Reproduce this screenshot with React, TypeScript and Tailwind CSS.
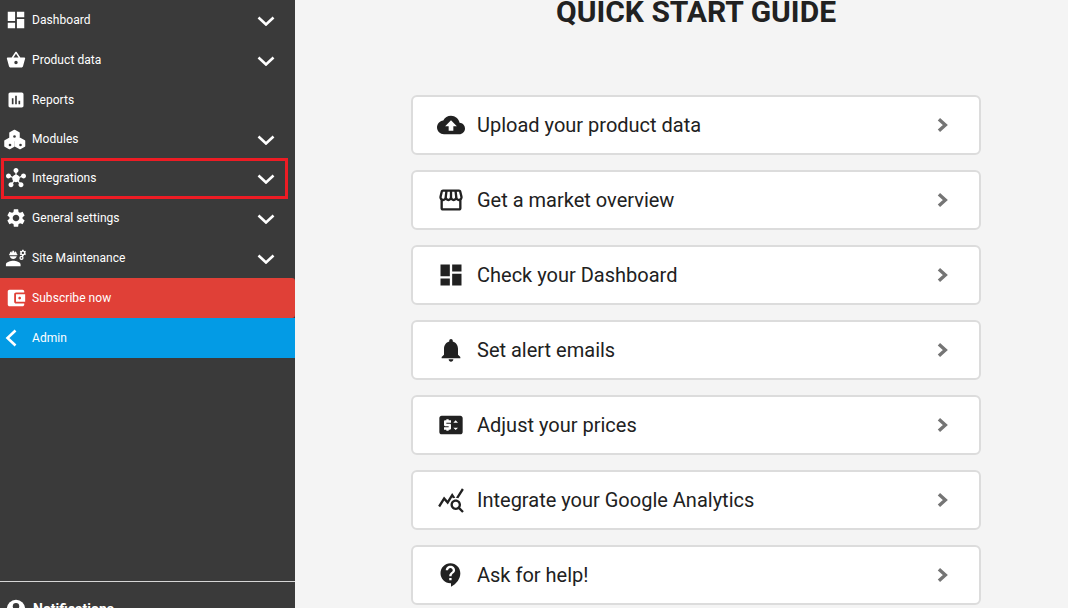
import type { ReactNode } from 'react';

const paths = {
  dashboard: 'M3 13h8V3H3v10zm0 8h8v-6H3v6zm10 0h8V11h-8v10zm0-18v6h8V3h-8z',
  basket:
    'M17.21 9l-4.38-6.56c-.19-.28-.51-.42-.83-.42-.32 0-.64.14-.83.43L6.79 9H2c-.55 0-1 .45-1 1 0 .09.01.18.04.27l2.54 9.27c.23.84 1 1.46 1.92 1.46h13c.92 0 1.69-.62 1.93-1.46l2.54-9.27L23 10c0-.55-.45-1-1-1h-4.79zM9 9l3-4.4L15 9H9zm3 8c-1.1 0-2-.9-2-2s.9-2 2-2 2 .9 2 2-.9 2-2 2z',
  reports:
    'M19 3H5c-1.1 0-2 .9-2 2v14c0 1.1.9 2 2 2h14c1.1 0 2-.9 2-2V5c0-1.1-.9-2-2-2zM9 17H7v-7h2v7zm4 0h-2V7h2v10zm4 0h-2v-4h2v4z',
  hub: 'M8.4 18.2c.38.5.6 1.12.6 1.8 0 1.66-1.34 3-3 3s-3-1.34-3-3 1.34-3 3-3c.44 0 .85.09 1.23.26l1.41-1.77c-.92-1.03-1.29-2.39-1.09-3.69l-2.03-.68c-.54.83-1.46 1.38-2.52 1.38-1.66 0-3-1.34-3-3s1.34-3 3-3 3 1.34 3 3c0 .07 0 .14-.01.21l2.03.68c.64-1.21 1.82-2.09 3.22-2.32V5.91C9.96 5.57 9 4.4 9 3c0-1.66 1.34-3 3-3s3 1.34 3 3c0 1.4-.96 2.57-2.25 2.91v2.16c1.4.23 2.58 1.11 3.22 2.32l2.03-.68C18 9.64 18 9.57 18 9.5c0-1.66 1.34-3 3-3s3 1.34 3 3-1.34 3-3 3c-1.06 0-1.98-.55-2.52-1.37l-2.03.68c.2 1.29-.16 2.65-1.09 3.69l1.41 1.77C17.15 17.09 17.56 17 18 17c1.66 0 3 1.34 3 3s-1.34 3-3 3-3-1.34-3-3c0-.68.22-1.3.6-1.8l-1.41-1.77c-1.35.75-3.01.76-4.38 0L8.4 18.2z',
  settings:
    'M19.14 12.94c.04-.3.06-.61.06-.94 0-.32-.02-.64-.07-.94l2.03-1.58c.18-.14.23-.41.12-.61l-1.92-3.32c-.12-.22-.37-.29-.59-.22l-2.39.96c-.5-.38-1.03-.7-1.62-.94l-.36-2.54c-.04-.24-.24-.41-.48-.41h-3.84c-.24 0-.43.17-.47.41l-.36 2.54c-.59.24-1.13.57-1.62.94l-2.39-.96c-.22-.08-.47 0-.59.22L2.74 8.87c-.12.21-.08.47.12.61l2.03 1.58c-.05.3-.09.63-.09.94s.02.64.07.94l-2.03 1.58c-.18.14-.23.41-.12.61l1.92 3.32c.12.22.37.29.59.22l2.39-.96c.5.38 1.03.7 1.62.94l.36 2.54c.05.24.24.41.48.41h3.84c.24 0 .44-.17.47-.41l.36-2.54c.59-.24 1.13-.56 1.62-.94l2.39.96c.22.08.47 0 .59-.22l1.92-3.32c.12-.22.07-.47-.12-.61l-2.01-1.58zM12 15.6c-1.98 0-3.6-1.62-3.6-3.6s1.62-3.6 3.6-3.6 3.6 1.62 3.6 3.6-1.62 3.6-3.6 3.6z',
  engineering:
    'M9 15c-2.67 0-8 1.34-8 4v2h16v-2c0-2.66-5.33-4-8-4zm13.1-8.16c.01-.11.02-.22.02-.34 0-.12-.01-.23-.03-.34l.74-.58c.07-.05.08-.15.04-.22l-.7-1.21c-.04-.08-.14-.1-.21-.08l-.86.35c-.18-.14-.38-.25-.59-.34l-.13-.93c-.02-.09-.09-.15-.18-.15h-1.4c-.09 0-.16.06-.17.15l-.13.93c-.21.09-.41.21-.59.34l-.87-.35c-.08-.03-.17 0-.21.08l-.7 1.21c-.04.08-.03.17.04.22l.74.58c-.02.11-.03.23-.03.34 0 .11.01.23.03.34l-.74.58c-.07.05-.08.15-.04.22l.7 1.21c.04.08.14.1.21.08l.87-.35c.18.14.38.25.59.34l.13.93c.01.09.08.15.17.15h1.4c.09 0 .16-.06.17-.15l.13-.93c.21-.09.41-.21.59-.34l.86.35c.08.03.17 0 .21-.08l.7-1.21c.04-.08.03-.17-.04-.22l-.73-.58zm-2.6.91c-.69 0-1.25-.56-1.25-1.25s.56-1.25 1.25-1.25 1.25.56 1.25 1.25-.56 1.25-1.25 1.25zM4.74 9h8.53c.27 0 .49-.22.49-.49v-.02c0-.27-.22-.49-.49-.49H13c0-1.48-.81-2.75-2-3.45v.95c0 .28-.22.5-.5.5s-.5-.22-.5-.5V4.14C9.68 4.06 9.35 4 9 4s-.68.06-1 .14V5.5c0 .28-.22.5-.5.5S7 5.78 7 5.5v-.95C5.81 5.25 5 6.52 5 8h-.26c-.27 0-.49.22-.49.49v.03c0 .26.22.48.49.48zM9 13c1.86 0 3.41-1.28 3.86-3H5.14c.45 1.72 2 3 3.86 3zM18 9.600a2.300 2.300 0 1 0 0 4.600 2.300 2.300 0 0 0 0-4.600zm0 3.200a.9.9 0 1 1 0-1.800.9.9 0 0 1 0 1.800z',
  wallet:
    'M21 18v1c0 1.1-.9 2-2 2H5c-1.11 0-2-.9-2-2V5c0-1.1.89-2 2-2h14c1.1 0 2 .9 2 2v1h-9c-1.11 0-2 .9-2 2v8c0 1.1.89 2 2 2h9zm-9-2h10V8H12v8zm4-2.5c-.83 0-1.5-.67-1.5-1.5s.67-1.5 1.5-1.5 1.5.67 1.5 1.5-.67 1.5-1.5 1.5z',
  cloud:
    'M19.35 10.04C18.67 6.59 15.64 4 12 4 9.11 4 6.6 5.64 5.35 8.04 2.34 8.36 0 10.91 0 14c0 3.31 2.69 6 6 6h13c2.76 0 5-2.24 5-5 0-2.64-2.05-4.78-4.65-4.96zM14 13v4h-4v-4H7l5-5 5 5h-3z',
  store:
    'M21.9 8.89l-1.05-4.37c-.22-.9-1-1.52-1.91-1.52H5.05c-.9 0-1.69.63-1.9 1.52L2.1 8.89c-.24 1.02-.02 2.06.62 2.88.08.11.19.19.28.29V19c0 1.1.9 2 2 2h14c1.1 0 2-.9 2-2v-6.94c.09-.09.2-.18.28-.28.64-.82.87-1.87.62-2.89zm-2.99-3.9l1.05 4.37c.1.42.01.84-.25 1.17-.14.18-.44.47-.94.47-.61 0-1.14-.49-1.21-1.14L16.98 5l1.93-.01zM13 5h1.96l.54 4.52c.05.39-.07.78-.33 1.07-.22.26-.54.41-.95.41-.67 0-1.22-.59-1.22-1.31V5zM8.49 9.52L9.04 5H11v4.69c0 .72-.55 1.31-1.29 1.31-.34 0-.65-.15-.89-.41-.25-.29-.37-.68-.33-1.07zm-4.45-.16L5.05 5h1.97l-.58 4.86c-.08.65-.6 1.14-1.21 1.14-.49 0-.8-.29-.93-.47-.27-.32-.36-.75-.26-1.17zM5 19v-6.03c.08.01.15.03.23.03.87 0 1.66-.36 2.24-.95.6.6 1.4.95 2.31.95.87 0 1.65-.36 2.23-.93.59.57 1.39.93 2.29.93.84 0 1.64-.35 2.24-.95.58.59 1.37.95 2.24.95.08 0 .15-.02.23-.03V19H5z',
  bell: 'M12 22c1.1 0 2-.9 2-2h-4c0 1.1.89 2 2 2zm6-6v-5c0-3.07-1.64-5.64-4.5-6.32V4c0-.83-.67-1.5-1.5-1.5s-1.5.67-1.5 1.5v.68C7.63 5.36 6 7.92 6 11v5l-2 2v1h16v-1l-2-2z',
  price:
    'M20 4H4c-1.11 0-1.99.89-1.99 2L2 18c0 1.11.89 2 2 2h16c1.11 0 2-.89 2-2V6c0-1.11-.89-2-2-2zM12 10H8v1h3c.55 0 1 .45 1 1v3c0 .55-.45 1-1 1h-1v1H8v-1H6v-2h4v-1H7c-.55 0-1-.45-1-1V9c0-.55.45-1 1-1h1V7h2v1h2v2zm4 6.25l-2-2h4l-2 2zM14 10l2-2 2 2h-4z',
  stats:
    'M19.88 18.47c.44-.7.7-1.51.7-2.39 0-2.49-2.01-4.5-4.5-4.5s-4.5 2.01-4.5 4.5 2.01 4.5 4.49 4.5c.88 0 1.7-.26 2.39-.7L21.58 23 23 21.58l-3.12-3.11zm-3.8.11c-1.38 0-2.5-1.12-2.5-2.5s1.12-2.5 2.5-2.5 2.5 1.12 2.5 2.5-1.12 2.5-2.5 2.5zm-.36-8.5c-.74.02-1.45.18-2.1.45l-.55-.83-3.8 6.18-3.01-3.52-3.63 5.81L1 17l5-8 3 3.5L13 6l2.72 4.08zm2.59.5c-.64-.28-1.33-.45-2.05-.49L21.38 2 23 3.18l-4.69 7.4z',
  help: 'M11.5 2C6.81 2 3 5.81 3 10.5S6.81 19 11.5 19h.5v3c4.86-2.34 8-7 8-11.5C20 5.81 16.19 2 11.5 2zm1 14.5h-2v-2h2v2zm0-3.5h-2c0-3.25 3-3 3-5 0-1.1-.9-2-2-2s-2 .9-2 2h-2c0-2.21 1.79-4 4-4s4 1.79 4 4c0 2.5-3 2.75-3 5z',
};

function Icon({ d, className }: { d: string; className: string }) {
  return (
    <svg viewBox="0 0 24 24" fill="currentColor" className={className}>
      <path d={d} />
    </svg>
  );
}

function ModulesIcon() {
  return (
    <svg viewBox="0 0 24 24" className="ml-[3px] h-[24px] w-[24px] shrink-0 text-white">
      <g fill="currentColor" stroke="currentColor" strokeWidth="1.500" strokeLinejoin="round">
        <path d="M11.500 3.500l4.500 2.500v5l-4.500 2.500L7 11V6z" />
        <path d="M6.500 11.500l4.500 2.500v5l-4.500 2.500L2 19v-5z" />
        <path d="M17 11.500l4.500 2.500v5L17 21.500 12.500 19v-5z" />
      </g>
      <circle cx="11.500" cy="9.500" r="1.300" fill="#3a3a3a" />
      <circle cx="7" cy="18" r="1.300" fill="#3a3a3a" />
      <circle cx="17.500" cy="18" r="1.300" fill="#3a3a3a" />
    </svg>
  );
}

function ExpandChevron() {
  return (
    <svg
      viewBox="0 0 18 10"
      fill="none"
      className="absolute left-[257px] top-[calc(50%+1px)] h-[10px] w-[18px] -translate-y-1/2 text-white"
    >
      <path d="M1.500 1.500L9 8.500l7.500-7" stroke="currentColor" strokeWidth="2.600" />
    </svg>
  );
}

type NavItem = { label: string; icon: ReactNode; expand?: boolean; height: string; outlined?: boolean };

const navIcon = 'ml-[5px] h-[22px] w-[22px] shrink-0 text-white';
const navIconSmall = 'ml-[6px] mr-px h-[20px] w-[20px] shrink-0 text-white';

const navItems: NavItem[] = [
  { label: 'Dashboard', icon: <Icon d={paths.dashboard} className={navIcon} />, expand: true, height: 'h-[40px]' },
  { label: 'Product data', icon: <Icon d={paths.basket} className={navIconSmall} />, expand: true, height: 'h-[40px]' },
  { label: 'Reports', icon: <Icon d={paths.reports} className={navIconSmall} />, height: 'h-[39px]' },
  { label: 'Modules', icon: <ModulesIcon />, expand: true, height: 'h-[39px]' },
  { label: 'Integrations', icon: <Icon d={paths.hub} className={navIconSmall} />, expand: true, height: 'h-[40px]', outlined: true },
  { label: 'General settings', icon: <Icon d={paths.settings} className={navIcon} />, expand: true, height: 'h-[40px]' },
  { label: 'Site Maintenance', icon: <Icon d={paths.engineering} className={navIcon} />, expand: true, height: 'h-[40px]' },
];

const guideIcon = 'h-[28px] w-[28px] shrink-0 text-[#212121]';

const guideItems = [
  { label: 'Upload your product data', d: paths.cloud },
  { label: 'Get a market overview', d: paths.store },
  { label: 'Check your Dashboard', d: paths.dashboard },
  { label: 'Set alert emails', d: paths.bell },
  { label: 'Adjust your prices', d: paths.price },
  { label: 'Integrate your Google Analytics', d: paths.stats },
  { label: 'Ask for help!', d: paths.help },
];

export default function App() {
  return (
    <div className="flex h-[608px] w-[1068px] overflow-hidden bg-[#f4f4f4] font-['Roboto',sans-serif]">
      {/* Sidebar */}
      <aside className="flex h-full w-[295px] shrink-0 flex-col bg-[#3a3a3a] text-[12px] tracking-[0.005em] text-white">
        <nav className="flex-1">
          {navItems.map((item) => (
            <div key={item.label} className={`relative flex items-center gap-[5px] ${item.height}`}>
              {item.icon}
              <span>{item.label}</span>
              {item.expand && <ExpandChevron />}
              {item.outlined && (
                <div className="absolute left-px top-0 h-[41px] w-[287px] border-[3px] border-[#ed1c24]" />
              )}
            </div>
          ))}
          <div className="flex h-[40px] items-center gap-[5px] rounded-r-[3px] bg-[#e04037]">
            <Icon d={paths.wallet} className={navIcon} />
            <span>Subscribe now</span>
          </div>
          <div className="flex h-[40px] items-center bg-[#039be5]">
            <svg viewBox="0 0 12 18" fill="none" className="ml-[5px] h-[18px] w-[12px] text-white">
              <path d="M10.500 1.500L2.500 9l8 7.500" stroke="currentColor" strokeWidth="2.600" />
            </svg>
            <span className="ml-[15px]">Admin</span>
          </div>
        </nav>
        <div className="h-[27px] border-t border-[#d6d6d6] pl-[5px] pt-[16px]">
          <div className="flex items-center gap-[6px] text-[14px] font-bold tracking-normal">
            <svg viewBox="0 0 24 24" className="h-[22px] w-[22px] shrink-0 text-white">
              <circle cx="12" cy="12" r="10" fill="currentColor" />
              <circle cx="12" cy="9" r="3.500" fill="#3a3a3a" />
            </svg>
            <span>Notifications</span>
          </div>
        </div>
      </aside>

      {/* Guide */}
      <main className="flex-1 pl-[116px]">
        <h1 className="-mt-[6px] w-[570px] text-center text-[30px] leading-[36px] font-bold text-[#212121]">
          QUICK START GUIDE
        </h1>
        <div className="mt-[65px] flex w-[570px] flex-col gap-[15px]">
          {guideItems.map((item) => (
            <div
              key={item.label}
              className="flex h-[60px] shrink-0 items-center gap-[12px] rounded-[6px] border-2 border-[#dcdcdc] bg-white pl-[24px] pr-[22px] text-[20px] text-[#212121]"
            >
              <Icon d={item.d} className={guideIcon} />
              <span className="flex-1">{item.label}</span>
              <svg viewBox="0 0 24 24" fill="none" className="h-[28px] w-[28px] text-[#757575]">
                <path d="M8.500 7l5.500 5-5.500 5" stroke="currentColor" strokeWidth="2.900" />
              </svg>
            </div>
          ))}
        </div>
      </main>
    </div>
  );
}
